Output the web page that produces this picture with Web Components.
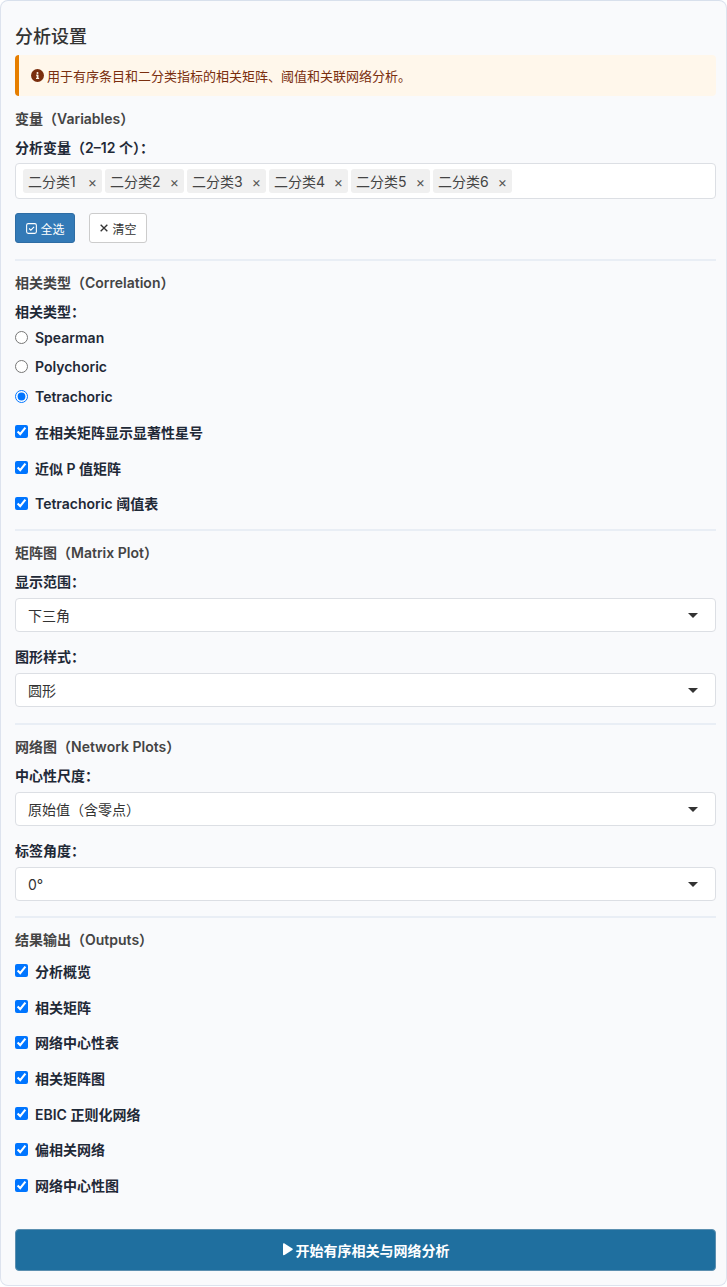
<!DOCTYPE html>
<html lang="zh">
<head>
<meta charset="utf-8">
<title>分析设置</title>
<style>
  html, body { margin: 0; background: #fff; }
  body {
    font-family: Inter, "Noto Sans CJK SC", sans-serif;
    font-size: 14px;
    color: #333;
  }
</style>
</head>
<body>
<ui-panel>
  <ui-title>分析设置</ui-title>
  <ui-alert>用于有序条目和二分类指标的相关矩阵、阈值和关联网络分析。</ui-alert>

  <ui-head style="--top: 13px">变量（Variables）</ui-head>
  <ui-label>分析变量（2–12 个）：</ui-label>
  <ui-tags items="二分类1,二分类2,二分类3,二分类4,二分类5,二分类6"></ui-tags>
  <ui-actions>
    <ui-button kind="primary" icon="check">全选</ui-button>
    <ui-button icon="times">清空</ui-button>
  </ui-actions>
  <ui-rule style="--gap: 15.5px"></ui-rule>

  <ui-head>相关类型（Correlation）</ui-head>
  <ui-label>相关类型：</ui-label>
  <ui-option type="radio" name="corr" style="--h: 29.5px; --top: 2px">Spearman</ui-option>
  <ui-option type="radio" name="corr" style="--h: 29.5px">Polychoric</ui-option>
  <ui-option type="radio" name="corr" checked style="--h: 29.5px">Tetrachoric</ui-option>
  <ui-option type="checkbox" checked style="--top: 3px">在相关矩阵显示显著性星号</ui-option>
  <ui-option type="checkbox" checked>近似 P 值矩阵</ui-option>
  <ui-option type="checkbox" checked>Tetrachoric 阈值表</ui-option>
  <ui-rule style="--gap: 8px"></ui-rule>

  <ui-head>矩阵图（Matrix Plot）</ui-head>
  <ui-label>显示范围：</ui-label>
  <ui-select>下三角</ui-select>
  <ui-label style="--top: 16px">图形样式：</ui-label>
  <ui-select>圆形</ui-select>
  <ui-rule style="--gap: 16px"></ui-rule>

  <ui-head>网络图（Network Plots）</ui-head>
  <ui-label>中心性尺度：</ui-label>
  <ui-select>原始值（含零点）</ui-select>
  <ui-label style="--top: 16px">标签角度：</ui-label>
  <ui-select>0°</ui-select>
  <ui-rule style="--gap: 15px"></ui-rule>

  <ui-head>结果输出（Outputs）</ui-head>
  <ui-option type="checkbox" checked style="--top: 3px">分析概览</ui-option>
  <ui-option type="checkbox" checked>相关矩阵</ui-option>
  <ui-option type="checkbox" checked>网络中心性表</ui-option>
  <ui-option type="checkbox" checked>相关矩阵图</ui-option>
  <ui-option type="checkbox" checked>EBIC 正则化网络</ui-option>
  <ui-option type="checkbox" checked>偏相关网络</ui-option>
  <ui-option type="checkbox" checked>网络中心性图</ui-option>

  <ui-run>开始有序相关与网络分析</ui-run>
</ui-panel>

<script>
  // small helper: every element is just a shadow root with its own style
  function simple(tag, html) {
    customElements.define(
      tag,
      class extends HTMLElement {
        constructor() {
          super();
          this.attachShadow({ mode: 'open' });
          this.shadowRoot.innerHTML = html;
        }
      }
    );
  }

  simple('ui-panel', `
    <style>
      :host {
        background-color: #f9fafc;
        border: 1px solid #dde3ee;
        border-top-color: #d8e0ec;
        border-radius: 8px;
        box-sizing: border-box;
        display: block;
        height: 1286px;
        padding: 25px 10px 0 14px;
        width: 727px;
      }
    </style>
    <slot></slot>
  `);

  simple('ui-title', `
    <style>
      :host {
        color: #333;
        display: block;
        font-size: 18px;
        font-weight: 500;
        line-height: 22px;
      }
    </style>
    <slot></slot>
  `);

  simple('ui-alert', `
    <style>
      :host {
        align-items: center;
        background-color: #fff7eb;
        border-left: 4px solid #e67e00;
        border-radius: 4px;
        box-sizing: border-box;
        color: #7a2e0e;
        display: flex;
        font-size: 13px;
        gap: 3px;
        height: 41px;
        margin-top: 7px;
        padding-left: 12px;
      }
      svg { flex: none; height: 13px; width: 13px; }
    </style>
    <svg viewBox="0 0 16 16"><circle cx="8" cy="8" r="8" fill="currentColor"/><rect x="7" y="7" width="2.2" height="5" fill="#fff7eb"/><rect x="6.2" y="11" width="3.8" height="1.3" fill="#fff7eb"/><rect x="6.2" y="7" width="2" height="1.2" fill="#fff7eb"/><circle cx="8" cy="4.8" r="1.2" fill="#fff7eb"/></svg>
    <slot></slot>
  `);

  simple('ui-head', `
    <style>
      :host {
        color: #444;
        display: block;
        font-size: 14px;
        font-weight: 600;
        line-height: 20px;
        margin-top: var(--top, 12px);
      }
    </style>
    <slot></slot>
  `);

  simple('ui-label', `
    <style>
      :host {
        color: #1f2937;
        display: block;
        font-size: 14px;
        font-weight: 600;
        line-height: 18px;
        margin-top: var(--top, 10px);
      }
    </style>
    <slot></slot>
  `);

  customElements.define(
    'ui-tags',
    class extends HTMLElement {
      constructor() {
        super();
        this.attachShadow({ mode: 'open' });
        this.shadowRoot.innerHTML = `
          <style>
            :host {
              align-items: center;
              background-color: #fff;
              border: 1px solid #dcdfe4;
              border-radius: 4px;
              box-sizing: border-box;
              display: flex;
              gap: 3px;
              height: 36px;
              margin-top: 6px;
              padding-left: 7px;
            }
            span {
              align-items: center;
              background-color: #f0f0f0;
              border-radius: 3px;
              box-sizing: border-box;
              color: #444;
              display: flex;
              font-size: 14px;
              height: 24px;
              justify-content: space-between;
              padding: 0 5px;
              width: 79px;
            }
            i { color: #555; font-size: 14px; font-style: normal; }
          </style>
        `;
        this.getAttribute('items').split(',').forEach((item) => {
          const tag = document.createElement('span');
          tag.innerHTML = `${item}<i>×</i>`;
          this.shadowRoot.appendChild(tag);
        });
      }
    }
  );

  simple('ui-actions', `
    <style>
      :host { display: flex; gap: 14px; margin-top: 14px; }
    </style>
    <slot></slot>
  `);

  customElements.define(
    'ui-button',
    class extends HTMLElement {
      constructor() {
        super();
        this.attachShadow({ mode: 'open' });
        const icon = this.getAttribute('icon') === 'check'
          ? '<svg viewBox="0 0 12 12" width="13" height="13" fill="none" stroke="currentColor"><rect x="1.5" y="1.5" width="9" height="9" rx="1.5"/><path d="M3.8 6l1.6 1.6 3-3.2"/></svg>'
          : '<svg viewBox="0 0 12 12" width="10" height="10" fill="none" stroke="currentColor" stroke-width="1.6"><path d="M2 2l8 8M10 2l-8 8"/></svg>';
        this.shadowRoot.innerHTML = `
          <style>
            :host {
              align-items: center;
              background-color: #fff;
              border: 1px solid #ccc;
              border-radius: 3px;
              box-sizing: border-box;
              color: #333;
              display: inline-flex;
              font-size: 12px;
              gap: 3px;
              height: 30px;
              justify-content: center;
              width: 58px;
            }
            :host([kind="primary"]) {
              background-color: #337ab7;
              border-color: #2e6da4;
              color: #fff;
              gap: 2px;
              width: 60px;
            }
          </style>
          ${icon}<slot></slot>
        `;
      }
    }
  );

  simple('ui-rule', `
    <style>
      :host {
        background-color: #e9eef5;
        display: block;
        height: 2px;
        margin-top: var(--gap, 16px);
      }
    </style>
  `);

  customElements.define(
    'ui-option',
    class extends HTMLElement {
      constructor() {
        super();
        this.attachShadow({ mode: 'open' });
        const checked = this.hasAttribute('checked') ? 'checked' : '';
        const name = this.getAttribute('name') || '';
        this.shadowRoot.innerHTML = `
          <style>
            :host {
              align-items: center;
              color: #1f2937;
              display: flex;
              font-size: 14px;
              font-weight: 600;
              gap: 7px;
              height: var(--h, 35.7px);
              margin-top: var(--top, 0);
            }
            input { height: 13px; margin: 0; width: 13px; }
          </style>
          <input type="${this.getAttribute('type')}" name="${name}" ${checked}>
          <slot></slot>
        `;
      }
    }
  );

  simple('ui-select', `
    <style>
      :host {
        align-items: center;
        background-color: #fff;
        border: 1px solid #dcdfe4;
        border-radius: 4px;
        box-sizing: border-box;
        color: #333;
        display: flex;
        font-size: 14px;
        height: 34px;
        justify-content: space-between;
        margin-top: 7px;
        padding: 0 17px 0 12px;
      }
      b {
        border-left: 5px solid transparent;
        border-right: 5px solid transparent;
        border-top: 5px solid #333;
        height: 0;
        width: 0;
      }
    </style>
    <slot></slot><b></b>
  `);

  simple('ui-run', `
    <style>
      :host {
        align-items: center;
        background-color: #1f6f9f;
        border: 1px solid #5b8fb0;
        border-radius: 4px;
        box-sizing: border-box;
        color: #fff;
        display: flex;
        font-size: 14px;
        font-weight: 600;
        gap: 3px;
        height: 42px;
        justify-content: center;
        margin-top: 26px;
      }
      svg { height: 13px; width: 11px; }
    </style>
    <svg viewBox="0 0 11 13"><path d="M1 1.2c0-.8.8-1.2 1.5-.8l7.8 5c.6.4.6 1.2 0 1.6l-7.8 5c-.7.4-1.5 0-1.5-.8z" fill="#fff"/></svg>
    <slot></slot>
  `);
</script>
</body>
</html>
